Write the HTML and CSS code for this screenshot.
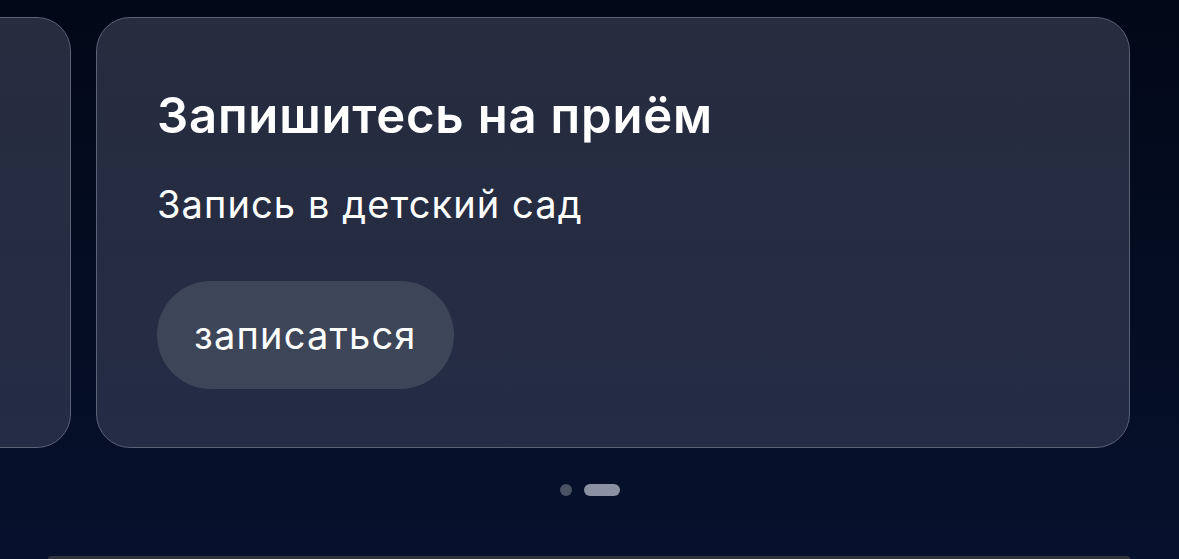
FILE: index.html
```html
<!DOCTYPE html>
<html lang="ru">
<head>
<meta charset="utf-8">
<link rel="stylesheet" href="styles.css">
</head>
<body>
<div class="page">
  <div class="carousel">
    <div class="track">
      <div class="card card-prev"></div>
      <div class="card">
        <h2 class="card-title">Запишитесь на приём</h2>
        <p class="card-text">Запись в детский сад</p>
        <button class="card-btn">записаться</button>
      </div>
    </div>
  </div>
  <div class="dots">
    <span class="dot"></span>
    <span class="dot dot-active"></span>
  </div>
  <div class="next-block"></div>
</div>
</body>
</html>
```

FILE: styles.css
```css
html, body {
  margin: 0;
  padding: 0;
  width: 1179px;
  height: 559px;
  overflow: hidden;
  background: linear-gradient(180deg, #020817 0%, #06112d 100%);
  font-family: Inter, "Noto Sans", sans-serif;
  color: #ffffff;
}
.page {
  display: flex;
  flex-direction: column;
  padding-top: 17px;
}
.carousel {
  overflow: hidden;
}
.track {
  display: flex;
  gap: 25px;
  margin-left: -963px;
}
.card {
  flex: 0 0 1034px;
  height: 431px;
  box-sizing: border-box;
  border: 1.5px solid #5a6276;
  border-radius: 34px;
  background: linear-gradient(180deg, #272c3e 0%, #242c46 100%);
  padding: 69px 0 0 60px;
  display: flex;
  flex-direction: column;
  align-items: flex-start;
}
.card-title {
  margin: 0;
  font-size: 49px;
  font-weight: 600;
  letter-spacing: 0.8px;
  line-height: 58px;
}
.card-text {
  margin: 36px 0 0;
  font-size: 38px;
  font-weight: 400;
  line-height: 46px;
  letter-spacing: 1.1px;
}
.card-btn {
  margin-top: 54px;
  height: 108px;
  padding: 0 37px;
  border: none;
  border-radius: 54px;
  background: #3d4558;
  color: #ffffff;
  font-family: Inter, "Noto Sans", sans-serif;
  font-size: 38px;
  font-weight: 400;
  letter-spacing: 1.2px;
}
.dots {
  display: flex;
  justify-content: center;
  align-items: center;
  gap: 12px;
  margin-top: 36px;
  height: 12px;
}
.dot {
  width: 12px;
  height: 12px;
  border-radius: 50%;
  background: #4a5265;
}
.dot-active {
  width: 36px;
  height: 12px;
  border-radius: 6px;
  background: #8b90a2;
}
.next-block {
  margin: 60px 49px 0 48px;
  height: 0;
  border-top: 3px solid #30343f;
  border-radius: 30px 30px 0 0;
}
```
